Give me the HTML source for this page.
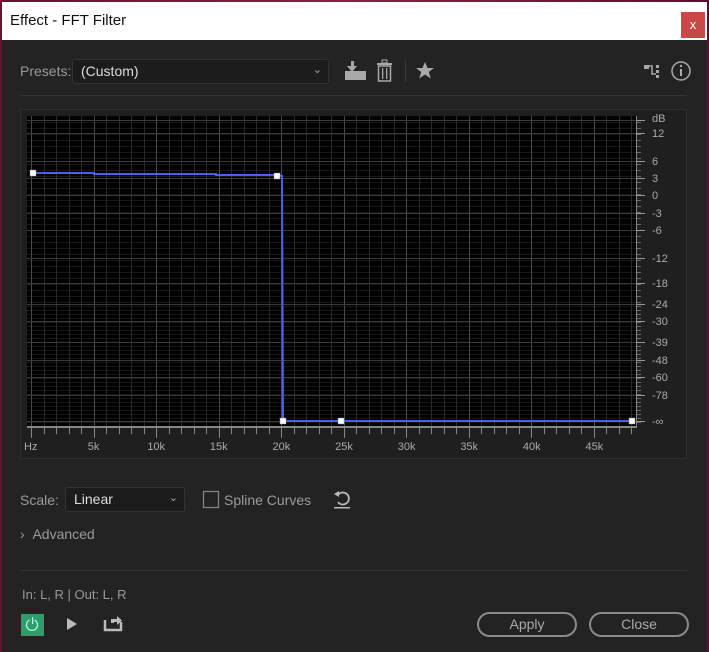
<!DOCTYPE html>
<html><head><meta charset="utf-8"><style>
*{margin:0;padding:0;box-sizing:border-box}
body{width:709px;height:652px;overflow:hidden;background:linear-gradient(90deg,#6a1030,#8a2040 50%,#5a1030);font-family:"Liberation Sans Narrow","Liberation Sans",sans-serif;position:relative}
.win{position:absolute;left:2px;top:2px;width:705px;height:650px;background:#232323}
.title{position:absolute;left:0;top:0;width:705px;height:38px;background:#fff;color:#111;font-size:15px;line-height:38px;padding-left:8px}
.close{position:absolute;left:679px;top:10px;width:24px;height:26px;background:#c84848;color:#fff;font-size:13px;text-align:center;line-height:26px}
.t{position:absolute;color:#9a9a9a;font-size:14px;white-space:nowrap}
.sel{position:absolute;background:#1c1c1c;border:1px solid #333;border-radius:3px;color:#ddd;font-size:14px}
.btn{position:absolute;border:2px solid #8a8a8a;border-radius:13px;color:#aaa;font-size:14px;text-align:center;line-height:21px}
</style></head><body>
<div class="win">
<div class="title">Effect - FFT Filter</div>
<div class="close">x</div>
</div>
<div class="t" style="left:20px;top:63px">Presets:</div>
<div class="sel" style="left:72px;top:59px;width:257px;height:25px;line-height:23px;padding-left:8px">(Custom)<span style="position:absolute;right:6px;top:-1px;font-size:11px;color:#aaa">&#8964;</span></div>
<svg style="position:absolute;left:0;top:0" width="709" height="652">
<g fill="#a8a8a8">
<rect x="345" y="71" width="21" height="9"/><rect x="351" y="61" width="3" height="9"/><path d="M347 66h10l-5 6z"/>
<rect x="377" y="63" width="15" height="2"/><rect x="382" y="60" width="5" height="3" fill="none" stroke="#a8a8a8"/>
<rect x="378.5" y="66" width="12" height="15" fill="none" stroke="#a8a8a8" stroke-width="1.5"/><rect x="382" y="68" width="1.3" height="11"/><rect x="386" y="68" width="1.3" height="11"/>
<rect x="405" y="60" width="1" height="22" fill="#3a3a3a"/>
<path d="M425 62l2.6 6h6.4l-5.2 4 2 6.5-5.8-4-5.8 4 2-6.5-5.2-4h6.4z"/>
<rect x="644" y="65" width="5" height="4"/><path d="M648 66h4v8h4" fill="none" stroke="#a8a8a8" stroke-width="1.5"/><rect x="656" y="65" width="3" height="3"/><rect x="656" y="70" width="3" height="3"/><rect x="656" y="75" width="3" height="3"/>
</g>
<circle cx="681" cy="71" r="9" fill="none" stroke="#aaa" stroke-width="1.5"/><rect x="680" y="69" width="2" height="7" fill="#aaa"/><circle cx="681" cy="66" r="1.2" fill="#aaa"/>
<rect x="20" y="95" width="667" height="1" fill="#353535"/>
<rect x="20.5" y="109.5" width="666" height="349" fill="#1f1f1f" stroke="#2e2e2e"/>
<rect x="27" y="116" width="610" height="311" fill="#000"/>
<g id="grid"></g>
<rect x="636" y="116" width="1" height="311" fill="#888"/>
<rect x="27" y="426" width="610" height="2" fill="#888"/>
<polyline points="33,173 94,173 94,174 216,174 216,175 277,175 282,176 283,421 341,421 632,421" fill="none" stroke="#4a5ff0" stroke-width="2"/>
<g fill="#fff" stroke="#888" stroke-width="0.5">
<rect x="30" y="170" width="6" height="6"/><rect x="274" y="173" width="6" height="6"/><rect x="280" y="418" width="6" height="6"/><rect x="338" y="418" width="6" height="6"/><rect x="629" y="418" width="6" height="6"/>
</g>
<g fill="#aaa" font-family="Liberation Sans" font-size="11" id="labels"></g>
<rect x="20" y="570" width="667" height="1" fill="#353535"/>
<rect x="203.5" y="491.5" width="15" height="16" fill="none" stroke="#888" stroke-width="1.2"/>
<path d="M338 495a6 6 0 1 1 0 7" fill="none" stroke="#bbb" stroke-width="1.8"/><path d="M334 494l5-3v6z" fill="#bbb"/><rect x="334" y="507" width="16" height="1.5" fill="#bbb"/>
<rect x="21" y="614" width="23" height="22" fill="#2e9e6a"/><path d="M29.5 620a5.5 5.5 0 1 0 5 0" fill="none" stroke="#bfe" stroke-width="1.2"/><rect x="32" y="617" width="1.2" height="7" fill="#bfe"/>
<path d="M67 618l10 6-10 6z" fill="#bbb"/>
<path d="M105 620v10h16v-8" fill="none" stroke="#bbb" stroke-width="2.5"/><path d="M111 623v-4h6v-3l5 4.5-5 4.5v-3h-3v1z" fill="#bbb"/>
</svg>
<div class="t" style="left:20px;top:492px">Scale:</div>
<div class="sel" style="left:65px;top:487px;width:120px;height:25px;line-height:23px;padding-left:8px">Linear<span style="position:absolute;right:6px;top:-1px;font-size:11px;color:#aaa">&#8964;</span></div>
<div class="t" style="left:224px;top:492px">Spline Curves</div>
<div class="t" style="left:20px;top:526px">›&nbsp;&nbsp;Advanced</div>
<div class="t" style="left:22px;top:587px;font-size:13px">In: L, R | Out: L, R</div>
<div class="btn" style="left:477px;top:612px;width:100px;height:25px">Apply</div>
<div class="btn" style="left:589px;top:612px;width:100px;height:25px">Close</div>
<script>
var g=document.getElementById('grid'),s='';
for(var y=122;y<424;y+=(y<300?6:4)){s+='<rect x="27" y="'+Math.round(y)+'" width="609" height="1" fill="#161616"/>';s+='<rect x="637" y="'+Math.round(y)+'" width="4" height="1" fill="#666"/>';}
for(var x=31;x<636;x+=12.5){var mj=Math.abs(((x-31)/12.5)%5)<0.01;s+='<rect x="'+Math.round(x)+'" y="116" width="1" height="310" fill="'+(mj?'#4a4a4a':'#2a2a2a')+'"/>';
s+='<rect x="'+Math.round(x)+'" y="428" width="1" height="'+(mj?10:6)+'" fill="#888"/>';}
var db=[[133,'12'],[161,'6'],[178,'3'],[195,'0'],[213,'-3'],[230,'-6'],[258,'-12'],[283,'-18'],[304,'-24'],[321,'-30'],[342,'-39'],[360,'-48'],[377,'-60'],[395,'-78'],[421,'-∞']];
db.forEach(function(d){s+='<rect x="27" y="'+d[0]+'" width="609" height="1" fill="#3a3a3a"/><rect x="637" y="'+d[0]+'" width="8" height="1" fill="#999"/>';});
s+='<rect x="27" y="120" width="609" height="1" fill="#3c3c3c"/><rect x="637" y="120" width="8" height="1" fill="#999"/>';
g.innerHTML=s;
var l='<text x="652" y="122">dB</text>';
db.forEach(function(d){l+='<text x="652" y="'+(d[0]+4)+'">'+d[1]+'</text>';});
var xl=['Hz','5k','10k','15k','20k','25k','30k','35k','40k','45k'];
xl.forEach(function(t,i){var x=i==0?24:31+i*62.6;l+='<text x="'+x+'" y="450" '+(i?'text-anchor="middle"':'')+'>'+t+'</text>';});
document.getElementById('labels').innerHTML=l;
</script>
</body></html>
